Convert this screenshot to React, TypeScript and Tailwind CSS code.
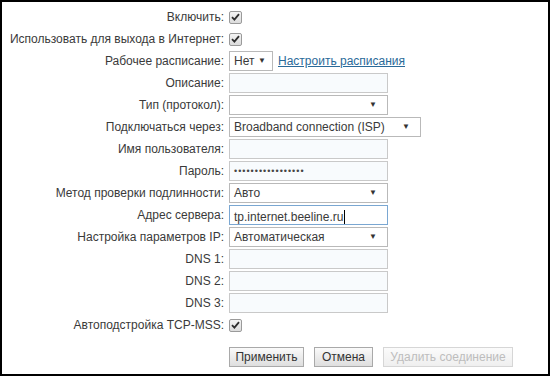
import React from 'react';

const font = { fontFamily: '"Liberation Sans", Arial, sans-serif' };

function Check() {
  return (
    <span className="inline-flex h-[13px] w-[13px] items-center justify-center rounded-[2px] border border-[#9a9a9a] bg-gradient-to-b from-[#f4f4f4] to-[#dcdcdc]">
      <svg width="9" height="8" viewBox="0 0 9 8">
        <path d="M1 4.2 L3.4 6.6 L8 1.2" fill="none" stroke="#2e2e2e" strokeWidth="1.8" />
      </svg>
    </span>
  );
}

function TextBox({ value, focus, dots }: { value?: string; focus?: boolean; dots?: boolean }) {
  return (
    <div
      className={
        'flex h-[20px] w-[159px] items-center px-[4px] ' +
        (focus
          ? 'border border-[#7aa7d2] bg-white'
          : 'border border-[#c9c9c9] bg-[#f8fbfd]')
      }
    >
      {dots ? (
        <span className="text-[9px] leading-none tracking-[1px] text-[#444]">{value}</span>
      ) : (
        <span className="text-[12px] leading-none text-[#3a3a3a]">
          {value}
          {focus && <span className="ml-[1px] inline-block h-[14px] w-px translate-y-[3px] bg-black" />}
        </span>
      )}
    </div>
  );
}

function Select({ value, width }: { value: string; width: string }) {
  return (
    <div className={'flex h-[20px] items-center justify-between border border-[#b9b9b9] bg-white pl-[4px] pr-[10px] ' + width}>
      <span className="text-[12px] leading-none text-[#3a3a3a]">{value}</span>
      <span className="text-[8px] leading-none text-[#333]">▼</span>
    </div>
  );
}

const rows: { label: string; control: React.ReactNode }[] = [
  { label: 'Включить:', control: <Check /> },
  { label: 'Использовать для выхода в Интернет:', control: <Check /> },
  {
    label: 'Рабочее расписание:',
    control: (
      <div className="flex items-center gap-[5px]">
        <div className="flex h-[20px] w-[44px] items-center justify-between border border-[#b9b9b9] bg-white pl-[4px] pr-[6px]">
          <span className="text-[12px] leading-none text-[#3a3a3a]">Нет</span>
          <span className="text-[8px] leading-none text-[#333]">▼</span>
        </div>
        <a className="text-[12px] text-[#2a6a99] underline">Настроить расписания</a>
      </div>
    ),
  },
  { label: 'Описание:', control: <TextBox /> },
  { label: 'Тип (протокол):', control: <Select value="" width="w-[159px]" /> },
  { label: 'Подключаться через:', control: <Select value="Broadband connection (ISP)" width="w-[192px]" /> },
  { label: 'Имя пользователя:', control: <TextBox /> },
  { label: 'Пароль:', control: <TextBox dots value="•••••••••••••••••" /> },
  { label: 'Метод проверки подлинности:', control: <Select value="Авто" width="w-[159px]" /> },
  { label: 'Адрес сервера:', control: <TextBox focus value="tp.internet.beeline.ru" /> },
  { label: 'Настройка параметров IP:', control: <Select value="Автоматическая" width="w-[159px]" /> },
  { label: 'DNS 1:', control: <TextBox /> },
  { label: 'DNS 2:', control: <TextBox /> },
  { label: 'DNS 3:', control: <TextBox /> },
  { label: 'Автоподстройка TCP-MSS:', control: <Check /> },
];

export default function App() {
  return (
    <div style={font} className="box-border h-[376px] w-[550px] border-2 border-black bg-white pt-[4px]">
      <div className="grid grid-cols-[222px_1fr] gap-x-[5px]">
        {rows.map((r, i) => (
          <React.Fragment key={i}>
            <div className="flex h-[22px] items-center justify-end text-[12px] text-[#3a3a3a]">{r.label}</div>
            <div className="flex h-[22px] items-center">{r.control}</div>
          </React.Fragment>
        ))}
      </div>
      <div className="mt-[11px] flex gap-[10px] pl-[227px]">
        <button className="h-[20px] w-[75px] border border-[#a9a9a9] bg-gradient-to-b from-[#fafafa] to-[#dedede] text-[12px] text-[#333]">
          Применить
        </button>
        <button className="h-[20px] w-[59px] border border-[#a9a9a9] bg-gradient-to-b from-[#fafafa] to-[#dedede] text-[12px] text-[#333]">
          Отмена
        </button>
        <button className="h-[20px] w-[130px] border border-[#d6d6d6] bg-gradient-to-b from-[#fbfbfb] to-[#efefef] text-[12px] text-[#bdbdbd]">
          Удалить соединение
        </button>
      </div>
    </div>
  );
}
